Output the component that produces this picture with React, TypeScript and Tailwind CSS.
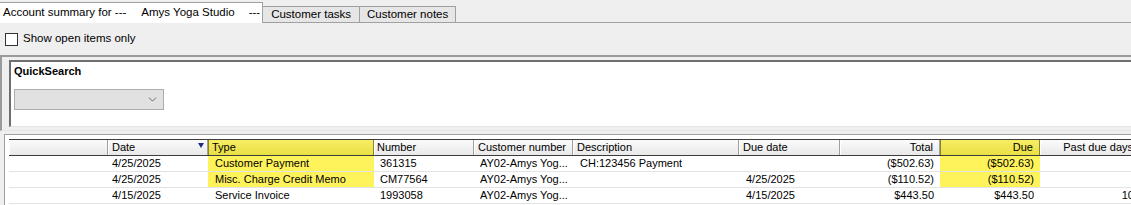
import { ChevronDown } from 'lucide-react'

interface Column {
  label: string
  w: number
  align: 'left' | 'right'
  hl?: boolean
  pad: string
}

const columns: Column[] = [
  { label: '', w: 99, align: 'left', pad: 'pl-[3px]' },
  { label: 'Date', w: 100, align: 'left', pad: 'pl-[3px]' },
  { label: 'Type', w: 166, align: 'left', hl: true, pad: 'pl-[3px]' },
  { label: 'Number', w: 100, align: 'left', pad: 'pl-[2px]' },
  { label: 'Customer number', w: 99, align: 'left', pad: 'pl-[3px]' },
  { label: 'Description', w: 166, align: 'left', pad: 'pl-[3px]' },
  { label: 'Due date', w: 101, align: 'left', pad: 'pl-[3px]' },
  { label: 'Total', w: 100, align: 'right', pad: 'pr-[6px]' },
  { label: 'Due', w: 100, align: 'right', hl: true, pad: 'pr-[6px]' },
  { label: 'Past due days', w: 100, align: 'right', pad: 'pr-[6px]' },
]

// padding for body cells, per column
const bodyPad = ['pl-[3px]', 'pl-[4px]', 'pl-[7px]', 'pl-[6px]', 'pl-[6px]', 'pl-[7px]', 'pl-[7px]', 'pr-[6px]', 'pr-[6px]', 'pr-[6px]']

const rows: { cells: string[]; hl: boolean }[] = [
  {
    cells: ['', '4/25/2025', 'Customer Payment', '361315', 'AY02-Amys Yog...', 'CH:123456 Payment', '', '($502.63)', '($502.63)', ''],
    hl: true,
  },
  {
    cells: ['', '4/25/2025', 'Misc. Charge Credit Memo', 'CM77564', 'AY02-Amys Yog...', '', '4/25/2025', '($110.52)', '($110.52)', ''],
    hl: true,
  },
  {
    cells: ['', '4/15/2025', 'Service Invoice', '1993058', 'AY02-Amys Yog...', '', '4/15/2025', '$443.50', '$443.50', '10'],
    hl: false,
  },
]

export default function App() {
  return (
    <div
      className="w-[1131px] h-[205px] overflow-hidden bg-[#f0eff0] text-black flex flex-col"
      style={{ fontFamily: '"Liberation Sans", Arial, sans-serif' }}
    >
      {/* tab strip */}
      <div className="h-[23px] flex items-end border-b border-[#a0a0a0] shrink-0">
        <div className="h-[21px] -mb-px bg-white border-r border-t border-[#a0a0a0] flex items-center pl-[3px] pr-[2px] text-[11.5px] whitespace-pre">
          <span>Account summary for ---</span>
          <span className="ml-[15px]">Amys Yoga Studio</span>
          <span className="ml-[14px]">---</span>
        </div>
        <div className="h-[16px] bg-[#e6e6e6] border-t border-r border-[#a0a0a0] flex items-center px-[8px] text-[11.5px]">
          Customer tasks
        </div>
        <div className="h-[16px] bg-[#e6e6e6] border-t border-r border-[#a0a0a0] flex items-center px-[7px] text-[11.5px]">
          Customer notes
        </div>
      </div>

      {/* open items */}
      <div className="h-[32px] flex items-center pl-[5px] shrink-0">
        <div className="w-[13px] h-[13px] border border-[#333] bg-white" />
        <span className="ml-[5px] text-[11.5px]">Show open items only</span>
      </div>

      {/* quick search group */}
      <div className="h-[76px] border-t-2 border-l-2 border-[#9a9a9a] border-b border-b-[#e6e6e6] pt-[3px] pl-[7px] pb-[3px] shrink-0">
        <div className="h-full bg-white border-t-2 border-l-2 border-[#6e6e6e] border-b border-b-[#e3e3e3] pl-[3px] pt-[2px]">
          <div className="text-[11px] font-bold leading-[14px]">QuickSearch</div>
          <div className="mt-[11px] w-[150px] h-[21px] bg-[#e1e1e1] border border-[#adadad] flex items-center justify-end pr-[4px]">
            <ChevronDown size={13} strokeWidth={1.3} className="text-[#333]" />
          </div>
        </div>
      </div>

      {/* grid */}
      <div className="mt-[3px] flex-1 border-t border-l border-[#a0a0a0] ml-[4px] bg-white pl-[4px] pt-[4px]">
        <div className="flex h-[17px] border-y border-[#3c3c3c] text-[11px]">
          {columns.map((c, i) => (
            <div
              key={i}
              style={{ width: c.w }}
              className={
                'relative shrink-0 flex items-center overflow-hidden whitespace-nowrap ' +
                (c.align === 'right' ? 'justify-end ' : '') +
                c.pad +
                (c.hl
                  ? ' bg-gradient-to-b from-[#f7ee63] to-[#e9df44] border-x border-[#8c8530]'
                  : ' bg-gradient-to-b from-[#fbfbfb] to-[#e9e9e9] border-l border-l-white border-r border-r-[#a0a0a0]') +
                (i === 0 ? ' border-l-[#3c3c3c]' : '')
              }
            >
              {c.label}
              {c.label === 'Date' && (
                <span className="absolute right-[3px] top-[3px] w-0 h-0 border-l-[3.5px] border-r-[3.5px] border-t-[5px] border-l-transparent border-r-transparent border-t-[#1f2a8a]" />
              )}
            </div>
          ))}
        </div>
        {rows.map((r, ri) => (
          <div key={ri} className="flex h-[16px] border-b border-[#e3e3e3] text-[11px]">
            {columns.map((c, ci) => (
              <div
                key={ci}
                style={{ width: c.w }}
                className={
                  'shrink-0 flex items-center overflow-hidden whitespace-nowrap ' +
                  (c.align === 'right' ? 'justify-end ' : '') +
                  bodyPad[ci] +
                  (c.hl && r.hl ? ' bg-[#fff35c]' : '')
                }
              >
                {r.cells[ci]}
              </div>
            ))}
          </div>
        ))}
      </div>
    </div>
  )
}
